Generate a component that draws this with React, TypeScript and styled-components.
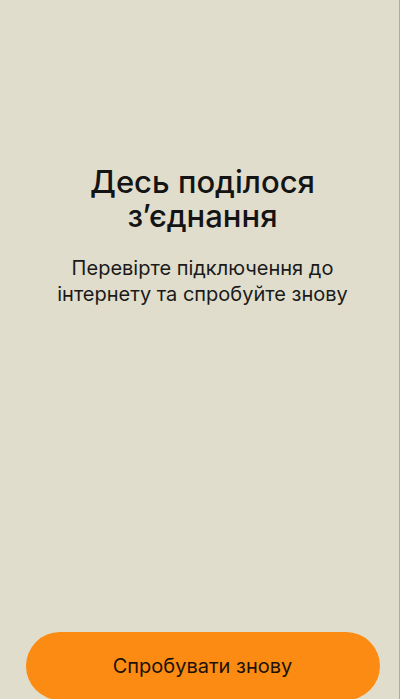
import React from "react";
import styled, { createGlobalStyle } from "styled-components";

const GlobalStyle = createGlobalStyle`
  html, body {
    margin: 0;
    padding: 0;
    background: #e0ddcc;
  }
  body {
    font-family: Inter, "Noto Sans", sans-serif;
  }
`;

const Screen = styled.div`
  height: 699px;
  box-sizing: border-box;
  display: flex;
  flex-direction: column;
  align-items: center;
  padding-left: 6px;
  background: #e0ddcc;
  border-right: 1px solid #aeab9c;
  overflow: hidden;
`;

const Content = styled.div`
  flex: 1;
  display: flex;
  flex-direction: column;
  align-items: center;
  padding: 165px 20px 0;
  text-align: center;
`;

const Title = styled.h1`
  margin: 0;
  font-size: 31px;
  line-height: 34px;
  font-weight: 500;
  color: #141414;
`;

const Subtitle = styled.p`
  margin: 22px 0 0;
  font-size: 20px;
  line-height: 26px;
  font-weight: 400;
  color: #1a1a1a;
`;

const RetryButton = styled.button`
  width: 354px;
  height: 68px;
  margin-bottom: -1px;
  border: none;
  border-radius: 34px;
  background: #fb8b12;
  color: #1a1208;
  font-family: inherit;
  font-size: 20px;
  font-weight: 400;
  cursor: pointer;
`;

export default function App() {
  return (
    <>
      <GlobalStyle />
      <Screen>
        <Content>
          <Title>
            Десь поділося
            <br />
            з’єднання
          </Title>
          <Subtitle>
            Перевірте підключення до
            <br />
            інтернету та спробуйте знову
          </Subtitle>
        </Content>
        <RetryButton>Спробувати знову</RetryButton>
      </Screen>
    </>
  );
}
